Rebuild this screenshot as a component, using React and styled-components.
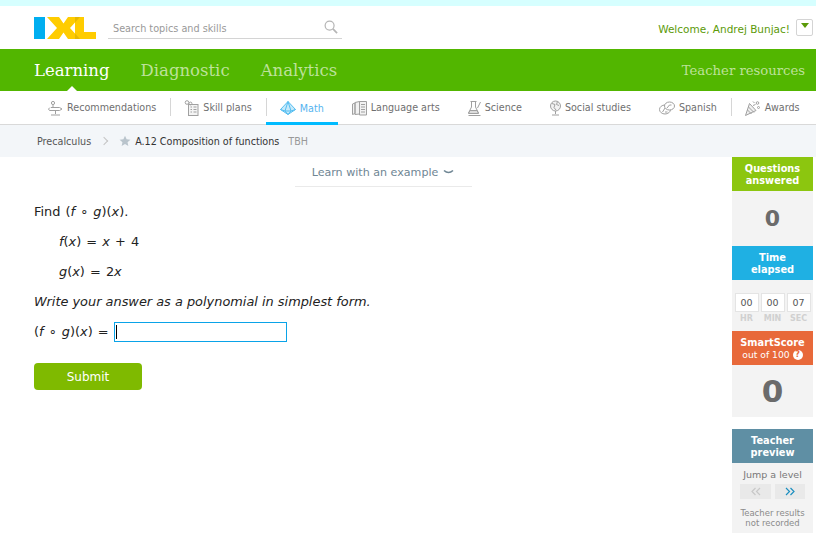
import React from "react";
import styled, { createGlobalStyle } from "styled-components";

const Global = createGlobalStyle`
  html, body { margin: 0; padding: 0; background: #fff; }
  body { font-family: "DejaVu Sans", Verdana, sans-serif; overflow: hidden; }
`;

const Page = styled.div`
  width: 816px;
  height: 553px;
  display: flex;
  flex-direction: column;
`;

const TopStrip = styled.div`
  height: 6px;
  background: #d6ffff;
`;

const Header = styled.header`
  height: 43px;
  display: flex;
  align-items: center;
  padding: 0 3px 0 34px;
`;

const Search = styled.div`
  width: 234px;
  height: 20px;
  margin-left: 12px;
  margin-top: 3px;
  padding-left: 5px;
  box-sizing: border-box;
  display: flex;
  align-items: center;
  justify-content: space-between;
  border-bottom: 1px solid #d4d4d4;
  font-size: 9.7px;
  color: #999;
`;

const Welcome = styled.div`
  margin-left: auto;
  font-size: 10.5px;
  color: #5c9a08;
  margin-top: 3px;
`;

const MenuBox = styled.div`
  width: 15px;
  height: 15px;
  margin-left: 6px;
  margin-top: -1px;
  border: 1px solid #d4d4d4;
  border-radius: 2px;
  display: flex;
  align-items: center;
  justify-content: center;
  &::after {
    content: "";
    border-left: 4px solid transparent;
    border-right: 4px solid transparent;
    border-top: 5px solid #5a9a08;
    margin-top: -3px;
  }
`;

const GreenBar = styled.nav`
  height: 42px;
  background: #52b600;
  display: flex;
  align-items: center;
  padding: 0 11px 0 34px;
  gap: 31px;
  font-family: "DejaVu Serif", serif;
`;

const GreenLink = styled.span`
  position: relative;
  font-size: ${(p) => (p.$small ? "13.2px" : "16.5px")};
  color: ${(p) => (p.$active ? "#fff" : "#bde29a")};
  margin-left: ${(p) => (p.$push ? "auto" : "0")};
  ${(p) =>
    p.$active &&
    `&::after {
      content: "";
      position: absolute;
      left: 50%;
      margin-left: -5px;
      bottom: -11px;
      border-left: 5px solid transparent;
      border-right: 5px solid transparent;
      border-bottom: 5px solid #fff;
    }`}
`;

const SubNav = styled.nav`
  height: 33px;
  padding-left: 34px;
  display: flex;
  align-items: stretch;
  border-bottom: 1px solid #d9d9d9;
`;

const Tab = styled.div`
  position: relative;
  display: flex;
  align-items: center;
  gap: 4px;
  padding: 0 14px;
  font-size: 9.6px;
  white-space: nowrap;
  color: ${(p) => (p.$active ? "#55b4ef" : "#6f6f6f")};
  box-shadow: ${(p) => (p.$active ? "inset 0 -3px 0 #00bbff" : "none")};
  margin-bottom: ${(p) => (p.$active ? "-1px" : "0")};
  svg { flex: none; }
`;

const Sep = styled.div`
  width: 1px;
  height: 18px;
  margin: -2px -1px 0 0;
  background: #d6d6d6;
  align-self: center;
`;

const Crumbs = styled.div`
  height: 32px;
  background: #f3f6f9;
  display: flex;
  align-items: center;
  padding-left: 37px;
  font-size: 9.6px;
  color: #555;
`;

const Chevron = styled.span`
  width: 5px;
  height: 5px;
  margin: 0 12px 0 10px;
  border-top: 1px solid #c4c4c4;
  border-right: 1px solid #c4c4c4;
  transform: rotate(45deg);
`;

const SkillName = styled.span`
  margin-left: 4px;
  color: #333;
`;

const SkillCode = styled.span`
  margin-left: 9px;
  color: #999;
`;

const Body = styled.div`
  flex: 1;
  display: flex;
  align-items: flex-start;
  padding-right: 3px;
`;

const Content = styled.main`
  width: 732px;
  box-sizing: border-box;
  padding-left: 34px;
  font-size: 12.9px;
  color: #222;
`;

const ExampleRow = styled.div`
  display: flex;
  justify-content: center;
`;

const Example = styled.div`
  width: 177px;
  height: 30px;
  padding-top: 1px;
  box-sizing: border-box;
  border-bottom: 1px solid #eaeaea;
  display: flex;
  align-items: center;
  justify-content: center;
  gap: 5px;
  font-size: 11.1px;
  color: #6f8694;
`;

const Line = styled.div`
  height: 30px;
  line-height: 30px;
  white-space: pre;
  padding-left: ${(p) => (p.$indent ? "25px" : "0")};
  font-style: ${(p) => (p.$italic ? "italic" : "normal")};
  word-spacing: ${(p) => (p.$italic ? "0" : "1px")};
  display: flex;
  align-items: center;
`;

const Problem = styled.div`
  padding-top: 10px;
`;

const V = styled.i``;

const AnswerInput = styled.div`
  position: relative;
  width: 173px;
  height: 20px;
  box-sizing: border-box;
  margin-left: 5px;
  border: 1px solid #0aa3e8;
`;

const Caret = styled.span`
  position: absolute;
  left: 1px;
  top: 2px;
  width: 1px;
  height: 14px;
  background: #000;
`;

const Submit = styled.button`
  display: block;
  margin-top: 16px;
  width: 108px;
  height: 27px;
  border: 0;
  border-radius: 4px;
  background: #7fba00;
  color: #fff;
  font: 12px "DejaVu Sans", sans-serif;
`;

const Side = styled.aside`
  width: 81px;
  display: flex;
  flex-direction: column;
`;

const SideHead = styled.div`
  height: 34px;
  padding-top: 1px;
  box-sizing: border-box;
  margin-top: ${(p) => (p.$gap ? "12px" : "0")};
  background: ${(p) => p.$color};
  color: #fff;
  display: flex;
  flex-direction: column;
  align-items: center;
  justify-content: center;
  text-align: center;
  font-size: 9.8px;
  line-height: 12px;
  font-weight: bold;
`;

const SmallLine = styled.span`
  display: flex;
  align-items: center;
  gap: 3px;
  font-weight: normal;
  font-size: 9.2px;
`;

const Help = styled.span`
  width: 10px;
  height: 10px;
  border-radius: 50%;
  background: #fff;
  color: #e8693a;
  font-size: 8px;
  line-height: 10px;
  font-weight: bold;
  text-align: center;
`;

const SideBody = styled.div`
  height: ${(p) => p.$h}px;
  background: #f3f3f3;
  display: flex;
  flex-direction: column;
  align-items: center;
`;

const Score = styled.div`
  margin: auto;
  font-size: ${(p) => (p.$big ? "31px" : "22px")};
  font-weight: bold;
  color: #6b6b6b;
`;

const Timer = styled.div`
  display: grid;
  grid-template-columns: repeat(3, 24px);
  gap: 2px;
  margin-top: 13px;
`;

const TimeCell = styled.div`
  display: flex;
  flex-direction: column;
  align-items: center;
  font-size: 8px;
  font-weight: bold;
  color: #d0d0d0;
`;

const Digits = styled.span`
  width: 24px;
  height: 19px;
  box-sizing: border-box;
  margin-bottom: 2px;
  border: 1px solid #e4e4e4;
  background: #fff;
  color: #555;
  font-size: 9.5px;
  font-weight: normal;
  line-height: 17px;
  text-align: center;
`;

const Jump = styled.div`
  margin-top: 6px;
  font-size: 9.5px;
  color: #777;
`;

const JumpRow = styled.div`
  display: flex;
  gap: 4px;
  margin-top: 4px;
`;

const JumpBtn = styled.div`
  width: ${(p) => p.$w}px;
  height: 15px;
  background: #e9e9e9;
  display: flex;
  align-items: center;
  justify-content: center;
`;

const Note = styled.div`
  margin-top: 9px;
  font-size: 8.5px;
  line-height: 10px;
  color: #8b8b8b;
  text-align: center;
`;

const Ico = ({ children, color = "#a0a0a0", w = 16 }) => (
  <svg width={w} height="16" viewBox={`0 0 ${w} 16`} fill="none" stroke={color} strokeWidth="1">
    {children}
  </svg>
);

const Logo = () => (
  <svg width="62" height="22" viewBox="0 0 62 22">
    <rect width="11" height="22" fill="#00aef0" />
    <polygon points="41,0 50,0 50,15 62,15 62,22 41,22" fill="#ffcc00" />
    <polygon points="13,0 25,0 29.5,6.5 34,0 46,0 36,11 46,22 34,22 29.5,15.5 25,22 13,22 23,11" fill="#ffcc00" />
    <polygon points="41,0 46,0 41,5.5" fill="#e6b800" />
    <polygon points="41,16.5 46,22 41,22" fill="#e6b800" />
  </svg>
);

const SearchIcon = () => (
  <svg width="14" height="14" viewBox="0 0 15 15" fill="none" stroke="#b5b5b5" strokeWidth="1.3" style={{ margin: "-4px 4px 0 0" }}>
    <circle cx="6" cy="6" r="4.8" />
    <path d="M9.6 9.6 L14 14" strokeWidth="1.8" />
  </svg>
);

const JumpArrows = ({ dir, color }) => (
  <svg width="10" height="9" viewBox="0 0 10 9" fill="none" stroke={color} strokeWidth="1.2">
    <path d={dir === "left" ? "M4.5 1 L1 4.5 L4.5 8 M9 1 L5.5 4.5 L9 8" : "M1 1 L4.5 4.5 L1 8 M5.5 1 L9 4.5 L5.5 8"} />
  </svg>
);

const icons = {
  rec: (
    <Ico w={15}>
      <circle cx="5" cy="3" r="1.6" />
      <path d="M5 5v2M3 7.5h8.5l2.5 1.5-2.5 1.5H1.5L0.5 9 2 7.5M7.5 10.5v3.5M3 15h9" />
    </Ico>
  ),
  plans: (
    <Ico w={15}>
      <rect x="4.5" y="4.5" width="9.5" height="11" fill="#f4f4f4" />
      <circle cx="3" cy="2.5" r="1.8" />
      <circle cx="6.5" cy="3.5" r="1.4" />
      <path d="M6.5 7h1.5M6.5 9.5h1.5M6.5 12h1.5M9.5 7h3M9.5 9.5h3M9.5 12h3" />
    </Ico>
  ),
  math: (
    <Ico color="#55bdf0">
      <path d="M8 1.5 L15.5 9.5 L8 14.5 L0.5 9.5 Z" fill="#c6eafb" />
      <path d="M8 1.5 L5 11 L8 14.5 L11 11 Z M0.5 9.5 L5 11 L11 11 L15.5 9.5" />
    </Ico>
  ),
  lang: (
    <Ico w={15}>
      <path d="M0.5 4 L3 3v10.5l-2.5 1zM3 2.5 L7.5 1.5v12.5L3 14.5zM7.5 1.5h7v13.5h-7z" fill="#f2f2f2" />
      <path d="M9 4.5h4M9 7h4M9 9.5h4M9 12h4" />
    </Ico>
  ),
  science: (
    <Ico w={13}>
      <path d="M2.5 1.5h6M3.5 1.5v5.5L0.5 13h10L7.5 7V1.5" />
      <path d="M2 10.5h7l1.500 3h-10z" fill="#dcdcdc" />
      <path d="M0.5 15.5h12M12.500 2 L9.500 8" />
    </Ico>
  ),
  social: (
    <Ico w={11}>
      <circle cx="5.5" cy="6" r="5" fill="#f2f2f2" />
      <path d="M5.5 11v3M2 15h7M2 3.5l3 1-1 3 2 2.5M7.5 1.5l-1 3 2.500 1" />
    </Ico>
  ),
  spanish: (
    <Ico>
      <ellipse cx="6" cy="9.5" rx="5.5" ry="4.5" />
      <ellipse cx="10.5" cy="6" rx="5" ry="4" fill="#fff" />
      <path d="M3.5 12 L6 8M6 12h2.5M8 8l2.5-3h2" />
    </Ico>
  ),
  awards: (
    <Ico>
      <path d="M0.5 15.5 L4.5 3.5 L11 10.5 Z" fill="#f0f0f0" />
      <path d="M2.5 10 L6.5 14M3.5 7 L9 12.5M8 1.5l1.5 1.5M8 5.5l2.5-1" />
      <circle cx="12.5" cy="3" r="1.3" />
      <circle cx="13.5" cy="7.5" r="1" />
    </Ico>
  ),
};

const Tabs = [
  ["rec", "Recommendations"],
  null,
  ["plans", "Skill plans"],
  null,
  ["math", "Math", true],
  ["lang", "Language arts"],
  ["science", "Science"],
  ["social", "Social studies"],
  ["spanish", "Spanish"],
  null,
  ["awards", "Awards"],
];

const Composite = () => (
  <>
    (<V>f</V> ∘ <V>g</V>)(<V>x</V>)
  </>
);

export default function App() {
  return (
    <Page>
      <Global />
      <TopStrip />
      <Header>
        <Logo />
        <Search>
          Search topics and skills
          <SearchIcon />
        </Search>
        <Welcome>Welcome, Andrej Bunjac!</Welcome>
        <MenuBox />
      </Header>
      <GreenBar>
        <GreenLink $active>Learning</GreenLink>
        <GreenLink>Diagnostic</GreenLink>
        <GreenLink>Analytics</GreenLink>
        <GreenLink $push $small>Teacher resources</GreenLink>
      </GreenBar>
      <SubNav>
        {Tabs.map((tab, i) =>
          tab ? (
            <Tab key={tab[0]} $active={tab[2]}>
              {icons[tab[0]]}
              {tab[1]}
            </Tab>
          ) : (
            <Sep key={i} />
          )
        )}
      </SubNav>
      <Crumbs>
        Precalculus
        <Chevron />
        <svg width="12" height="12" viewBox="0 0 24 24" fill="#b9c4cc">
          <path d="M12 1.5l3.2 7 7.6.8-5.7 5.1 1.6 7.6-6.7-3.9-6.7 3.9 1.6-7.6L1.2 9.3l7.6-.8z" />
        </svg>
        <SkillName>A.12 Composition of functions</SkillName>
        <SkillCode>TBH</SkillCode>
      </Crumbs>
      <Body>
        <Content>
          <ExampleRow>
            <Example>
              Learn with an example
              <svg width="11" height="6" viewBox="0 0 11 6" fill="none" stroke="#6f8694" strokeWidth="1.6">
                <path d="M1 1.5 Q5.5 5.5 10 1.5" />
              </svg>
            </Example>
          </ExampleRow>
          <Problem>
            <Line>
              Find <Composite />.
            </Line>
            <Line $indent>
              <V>f</V>(<V>x</V>) = <V>x</V> + 4
            </Line>
            <Line $indent>
              <V>g</V>(<V>x</V>) = 2<V>x</V>
            </Line>
            <Line $italic>Write your answer as a polynomial in simplest form.</Line>
            <Line>
              <Composite /> =
              <AnswerInput>
                <Caret />
              </AnswerInput>
            </Line>
          </Problem>
          <Submit>Submit</Submit>
        </Content>
        <Side>
          <SideHead $color="#8cc60f">
            Questions
            <br />
            answered
          </SideHead>
          <SideBody $h={55}>
            <Score>0</Score>
          </SideBody>
          <SideHead $color="#1fb0e3">
            Time
            <br />
            elapsed
          </SideHead>
          <SideBody $h={51}>
            <Timer>
              <TimeCell>
                <Digits>00</Digits>HR
              </TimeCell>
              <TimeCell>
                <Digits>00</Digits>MIN
              </TimeCell>
              <TimeCell>
                <Digits>07</Digits>SEC
              </TimeCell>
            </Timer>
          </SideBody>
          <SideHead $color="#e8693a">
            SmartScore
            <SmallLine>
              out of 100 <Help>?</Help>
            </SmallLine>
          </SideHead>
          <SideBody $h={52}>
            <Score $big>0</Score>
          </SideBody>
          <SideHead $gap $color="#5f8fa4">
            Teacher
            <br />
            preview
          </SideHead>
          <SideBody $h={70}>
            <Jump>Jump a level</Jump>
            <JumpRow>
              <JumpBtn $w={31}>
                <JumpArrows dir="left" color="#c8c8c8" />
              </JumpBtn>
              <JumpBtn $w={30}>
                <JumpArrows dir="right" color="#1c8fc0" />
              </JumpBtn>
            </JumpRow>
            <Note>
              Teacher results
              <br />
              not recorded
            </Note>
          </SideBody>
        </Side>
      </Body>
    </Page>
  );
}
